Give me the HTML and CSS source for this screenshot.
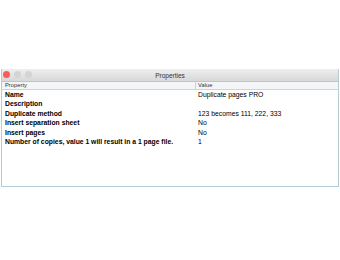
FILE: index.html
```html
<!DOCTYPE html>
<html lang="en">
<head>
  <meta charset="UTF-8">
  <title>Properties</title>
  <link rel="stylesheet" href="styles.css">
</head>
<body>
  <div class="window">
    <div class="titlebar">
      <div class="lights">
        <span class="light close"></span>
        <span class="light"></span>
        <span class="light"></span>
      </div>
      <div class="title">Properties</div>
    </div>
    <div class="grid">
      <div class="head key">Property</div>
      <div class="head val">Value</div>

      <div class="key">Name</div>
      <div class="val">Duplicate pages PRO</div>
      <div class="key">Description</div>
      <div class="val"></div>
      <div class="key">Duplicate method</div>
      <div class="val">123 becomes 111, 222, 333</div>
      <div class="key">Insert separation sheet</div>
      <div class="val">No</div>
      <div class="key">Insert pages</div>
      <div class="val">No</div>
      <div class="key">Number of copies, value 1 will result in a 1 page file.</div>
      <div class="val">1</div>
    </div>
  </div>
</body>
</html>
```

FILE: styles.css
```css
body {
  margin: 0;
  padding: 69px 1px 0 1px;
  background: #ffffff;
  font-family: "Liberation Sans", Arial, sans-serif;
  color: #000;
}

.window {
  width: 336px;
  height: 117px;
  border: 1px solid #b4ccd6;
  border-top: none;
  background: #ffffff;
}

/* title bar */
.titlebar {
  position: relative;
  height: 12px;
  background: linear-gradient(#eeeeee, #d8d8d8);
  border-bottom: 1px solid #c4c4c4;
  display: flex;
  align-items: center;
  justify-content: center;
}

.lights {
  position: absolute;
  left: 1px;
  top: 2px;
  display: flex;
  gap: 4px;
}

.light {
  width: 7px;
  height: 7px;
  border-radius: 50%;
  background: #d4d4d4;
}

.light.close {
  background: #f0605a;
}

.title {
  font-size: 6.5px;
  color: #333;
}

/* property grid */
.grid {
  display: grid;
  grid-template-columns: 194px 1fr;
}

.grid div {
  height: 9.4px;
  line-height: 9.4px;
  font-size: 6.8px;
  white-space: nowrap;
}

.key {
  padding-left: 3px;
  font-weight: bold;
}

.val {
  padding-left: 2px;
}

.grid .head {
  height: 7px;
  line-height: 7px;
  font-size: 5.8px;
  font-weight: normal;
  color: #333;
  background: #f3f5f7;
  border-bottom: 1px solid #c9d4dc;
}

.grid .head.key {
  border-right: 1px solid #c9d4dc;
}
```
